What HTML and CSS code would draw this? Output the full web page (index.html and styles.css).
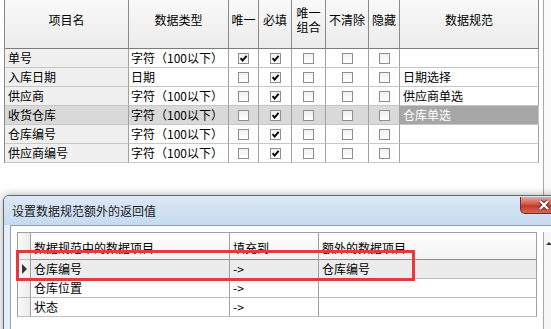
FILE: index.html
```html
<!DOCTYPE html>
<html lang="zh-CN">
  <head>
    <meta charset="UTF-8" />
    <title>数据规范</title>
    <link rel="stylesheet" href="styles.css">
  </head>
  <body>
    <div class="top">
      <div class="grid">
        <div class="hd">项目名</div>
        <div class="hd">数据类型</div>
        <div class="hd">唯一</div>
        <div class="hd">必填</div>
        <div class="hd two">唯一<br>组合</div>
        <div class="hd">不清除</div>
        <div class="hd">隐藏</div>
        <div class="hd">数据规范</div>

        <div class="row">
          <div class="name">单号</div>
          <div>字符（100以下）</div>
          <div class="ck"><span class="cb"><svg viewBox="0 0 9 9"><path d="M1.6 4.2 L3.6 6.6 L7.6 1.8" /></svg></span></div>
          <div class="ck"><span class="cb"><svg viewBox="0 0 9 9"><path d="M1.6 4.2 L3.6 6.6 L7.6 1.8" /></svg></span></div>
          <div class="ck"><span class="cb"></span></div>
          <div class="ck"><span class="cb"></span></div>
          <div class="ck"><span class="cb"></span></div>
          <div class="spec"></div>
        </div>
        <div class="row">
          <div class="name">入库日期</div>
          <div>日期</div>
          <div class="ck"><span class="cb"></span></div>
          <div class="ck"><span class="cb"><svg viewBox="0 0 9 9"><path d="M1.6 4.2 L3.6 6.6 L7.6 1.8" /></svg></span></div>
          <div class="ck"><span class="cb"></span></div>
          <div class="ck"><span class="cb"></span></div>
          <div class="ck"><span class="cb"></span></div>
          <div class="spec">日期选择</div>
        </div>
        <div class="row">
          <div class="name">供应商</div>
          <div>字符（100以下）</div>
          <div class="ck"><span class="cb"></span></div>
          <div class="ck"><span class="cb"><svg viewBox="0 0 9 9"><path d="M1.6 4.2 L3.6 6.6 L7.6 1.8" /></svg></span></div>
          <div class="ck"><span class="cb"></span></div>
          <div class="ck"><span class="cb"></span></div>
          <div class="ck"><span class="cb"></span></div>
          <div class="spec">供应商单选</div>
        </div>
        <div class="row sel">
          <div class="name">收货仓库</div>
          <div>字符（100以下）</div>
          <div class="ck"><span class="cb"></span></div>
          <div class="ck"><span class="cb"><svg viewBox="0 0 9 9"><path d="M1.6 4.2 L3.6 6.6 L7.6 1.8" /></svg></span></div>
          <div class="ck"><span class="cb"></span></div>
          <div class="ck"><span class="cb"></span></div>
          <div class="ck"><span class="cb"></span></div>
          <div class="spec current">仓库单选</div>
        </div>
        <div class="row">
          <div class="name">仓库编号</div>
          <div>字符（100以下）</div>
          <div class="ck"><span class="cb"></span></div>
          <div class="ck"><span class="cb"><svg viewBox="0 0 9 9"><path d="M1.6 4.2 L3.6 6.6 L7.6 1.8" /></svg></span></div>
          <div class="ck"><span class="cb"></span></div>
          <div class="ck"><span class="cb"></span></div>
          <div class="ck"><span class="cb"></span></div>
          <div class="spec"></div>
        </div>
        <div class="row">
          <div class="name">供应商编号</div>
          <div>字符（100以下）</div>
          <div class="ck"><span class="cb"></span></div>
          <div class="ck"><span class="cb"><svg viewBox="0 0 9 9"><path d="M1.6 4.2 L3.6 6.6 L7.6 1.8" /></svg></span></div>
          <div class="ck"><span class="cb"></span></div>
          <div class="ck"><span class="cb"></span></div>
          <div class="ck"><span class="cb"></span></div>
          <div class="spec"></div>
        </div>
      </div>
      <div class="vbar"></div>
    </div>

    <div class="dialog">
      <div class="title">设置数据规范额外的返回值</div>
      <div class="close">
        <svg viewBox="0 0 14 12"><path d="M3 2 L11 10 M11 2 L3 10" class="xo" /><path d="M3 2 L11 10 M11 2 L3 10" class="xi" /></svg>
      </div>

      <div class="client">
        <div class="dgrid">
          <div class="rh"></div>
          <div class="dh">数据规范中的数据项目</div>
          <div class="dh">填充到</div>
          <div class="dh">额外的数据项目</div>

          <div class="drow on">
            <div class="rh"><span class="arrow"></span></div>
            <div>仓库编号</div>
            <div>-&gt;</div>
            <div>仓库编号</div>
          </div>
          <div class="drow">
            <div class="rh"></div>
            <div>仓库位置</div>
            <div>-&gt;</div>
            <div></div>
          </div>
          <div class="drow">
            <div class="rh"></div>
            <div>状态</div>
            <div>-&gt;</div>
            <div></div>
          </div>
        </div>
        <div class="dscroll"><span class="up"></span></div>
      </div>

      <!-- red box drawn over the first row -->
      <div class="mark"></div>
    </div>
  </body>
</html>
```

FILE: styles.css
```css
body {
  margin: 0;
  width: 551px;
  height: 329px;
  overflow: hidden;
  background-color: #fff;
  font-family: "Noto Sans CJK SC", "Liberation Sans", sans-serif;
  font-size: 12px;
  color: #000;
}

/* top sheet */
.top {
  display: flex;
  height: 195px;
}

.grid {
  display: grid;
  grid-template-columns: 124px 100px 30px 33px 34px 43px 31px 139px;
  grid-template-rows: 57px;
  grid-auto-rows: 19px;
  align-self: flex-start;
  margin: -8px 0 0 4px;
  border-left: 1px solid #8a8a8a;
}

.grid > div,
.row > div {
  box-sizing: border-box;
  border-right: 1px solid #a0a0a0;
  border-bottom: 1px solid #c6c6c6;
  line-height: 18px;
  padding-left: 2px;
  white-space: nowrap;
}

.grid .hd {
  display: flex;
  align-items: center;
  justify-content: center;
  padding: 0 0 1px;
  background: linear-gradient(#fbfbfb, #ececec);
  border-right-color: #8a8a8a;
  border-bottom-color: #7d7d7d;
  line-height: 14px;
  text-align: center;
}

.row {
  display: contents;
}

.row > div {
  background-color: #fff;
}

.row > .name {
  background-color: #f0f0f0;
  padding-left: 3px;
}

.row > .spec {
  padding-left: 3px;
}

.row.sel > div {
  background-color: #d9d9d9;
}

.row.sel > .current {
  background-color: #a6a6a6;
  color: #fff;
  border-right-color: #c6c6c6;
}

.ck {
  display: flex;
  align-items: center;
  justify-content: center;
  padding: 0 !important;
}

.cb {
  box-sizing: border-box;
  width: 11px;
  height: 11px;
  border: 1px solid #8e8e8e;
  background: linear-gradient(#f1f1f1, #fff);
}

.cb svg {
  display: block;
  width: 9px;
  height: 9px;
}

.cb path {
  fill: none;
  stroke: #000;
  stroke-width: 1.9;
}

.vbar {
  margin-left: 4px;
  width: 8px;
  border-left: 1px solid #a8a8a8;
  background-color: #fafafa;
}

/* dialog */
.dialog {
  position: relative;
  margin-left: 3px;
  width: 580px;
  height: 150px;
  border: 1px solid #5e6b78;
  border-radius: 6px 6px 0 0;
  background-color: #e6eef8;
  box-shadow: 0 0 9px rgba(0, 0, 0, 0.35);
}

.title {
  height: 29px;
  line-height: 29px;
  padding-left: 8px;
  border-radius: 5px 5px 0 0;
  background: linear-gradient(#dbe8f6, #c6daf0);
  color: #1a1a1a;
}

.close {
  position: absolute;
  top: 1px;
  left: 516px;
  width: 44px;
  height: 17px;
  box-sizing: border-box;
  border: 1px solid #7a2a22;
  border-top: none;
  border-radius: 0 0 0 5px;
  background: linear-gradient(#e6a89e, #d2584b 45%, #c0392d 55%, #d46a56);
  display: flex;
  align-items: center;
  padding-left: 16px;
}

.close svg {
  width: 14px;
  height: 12px;
}

.close .xo {
  stroke: #5a2a24;
  stroke-width: 4.2;
}

.close .xi {
  stroke: #fff;
  stroke-width: 2.4;
}

.client {
  display: flex;
  height: 120px;
  margin-left: 6px;
  padding: 6px 0 0 6px;
  border: 1px solid #8d9fb3;
  background-color: #fff;
}

.dgrid {
  display: grid;
  grid-template-columns: 13px 199px 89px 218px;
  grid-template-rows: 27px;
  grid-auto-rows: 19px;
  align-self: flex-start;
  border-left: 1px solid #a0a0a0;
  border-top: 1px solid #a0a0a0;
}

.dgrid > div,
.drow > div {
  box-sizing: border-box;
  border-right: 1px solid #a0a0a0;
  border-bottom: 1px solid #bfbfbf;
  padding-left: 3px;
  line-height: 18px;
  background-color: #fff;
  white-space: nowrap;
}

.dgrid .dh {
  padding-top: 4px;
  line-height: 22px;
  background: linear-gradient(#fff, #f3f3f3);
  border-bottom-color: #8f8f8f;
}

.dgrid .rh,
.drow .rh {
  padding: 0;
  background: linear-gradient(to right, #fafafa, #ececec);
  display: flex;
  align-items: center;
  justify-content: center;
}

.drow {
  display: contents;
}

.drow.on > div {
  background-color: #ececec;
}

.arrow {
  width: 0;
  height: 0;
  border-top: 5px solid transparent;
  border-bottom: 5px solid transparent;
  border-left: 5px solid #333;
  margin-left: 1px;
}

.dscroll {
  margin-left: 6px;
  width: 10px;
  border-left: 1px solid #a8a8a8;
  background-color: #f7f7f7;
  display: flex;
  justify-content: center;
  padding-top: 10px;
}

.up {
  width: 0;
  height: 0;
  border-left: 3px solid transparent;
  border-right: 3px solid transparent;
  border-bottom: 3px solid #333;
}

.mark {
  position: absolute;
  left: 12px;
  top: 54px;
  width: 399px;
  height: 31px;
  box-sizing: border-box;
  border: 3px solid #e23a3f;
}
```
